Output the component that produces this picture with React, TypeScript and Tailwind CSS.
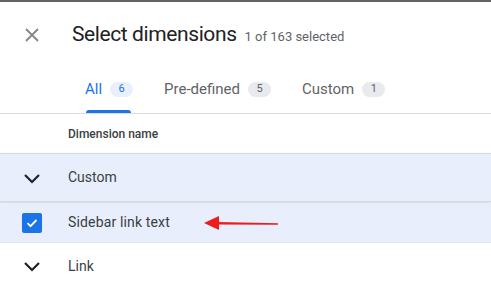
import React from 'react';

function Chevron() {
  return (
    <svg width="18" height="12" viewBox="0 0 18 12" className="text-[#202124]">
      <path d="M2 3l7 7 7-7" fill="none" stroke="currentColor" strokeWidth="2.2" />
    </svg>
  );
}

function Badge({ n, active }: { n: number; active?: boolean }) {
  return (
    <span
      className={
        active
          ? 'ml-2 inline-flex h-[15px] w-[23px] items-center justify-center rounded-full bg-[#e8f0fe] text-[11px] text-[#1a73e8]'
          : 'ml-2 inline-flex h-[15px] w-[23px] items-center justify-center rounded-full bg-[#e8eaed] text-[11px] text-[#5f6368]'
      }
    >
      {n}
    </span>
  );
}

export default function App() {
  return (
    <div className="h-[288px] w-[491px] overflow-hidden bg-white font-['Roboto',sans-serif] text-[#3c4043]">
      <div className="h-[2px] bg-[#5f6368]" />

      {/* Title */}
      <div className="flex h-[62px] items-center pt-[3px]">
        <div className="flex w-[72px] justify-center pr-[8px]">
          <svg width="14" height="14" viewBox="0 0 14 14">
            <path d="M1 1l12 12M13 1L1 13" stroke="#80868b" strokeWidth="1.8" />
          </svg>
        </div>
        <span className="text-[21px] tracking-[-0.4px] text-[#202124]">Select dimensions</span>
        <span className="ml-[8px] mt-[5px] text-[13px] text-[#5f6368]">1 of 163 selected</span>
      </div>

      {/* Tabs */}
      <div className="flex h-[50px] items-end border-b border-[#dadce0] pl-[85px]">
        <div className="relative flex h-full items-center pt-[2px]">
          <span className="text-[15px] text-[#1a73e8]">All</span>
          <Badge n={6} active />
          <div className="absolute bottom-0 left-[1px] right-[2px] h-[3px] rounded-t-[3px] bg-[#1a73e8]" />
        </div>
        <div className="ml-[31px] flex h-full items-center pt-[2px]">
          <span className="text-[15px] text-[#5f6368]">Pre-defined</span>
          <Badge n={5} />
        </div>
        <div className="ml-[31px] flex h-full items-center pt-[2px]">
          <span className="text-[15px] text-[#5f6368]">Custom</span>
          <Badge n={1} />
        </div>
      </div>

      {/* Header */}
      <div className="flex h-[39px] items-center pl-[68px] text-[12px] font-medium text-[#3c4043]">
        Dimension name
      </div>

      {/* Custom group */}
      <div className="flex h-[49px] items-center border-y border-[#d6d9de] bg-[#e8eefb] shadow-[0_1px_2px_rgba(60,64,67,0.25)]">
        <div className="flex w-[64px] justify-center">
          <Chevron />
        </div>
        <span className="pl-[4px] text-[14px]">Custom</span>
      </div>

      {/* Sidebar link text */}
      <div className="mt-[1px] flex h-[40px] items-center border-b border-[#e3e6ea] bg-[#e8eefb]">
        <div className="flex w-[64px] justify-center">
          <div className="flex h-[20px] w-[20px] items-center justify-center rounded-[2px] bg-[#1a73e8]">
            <svg width="14" height="14" viewBox="0 0 14 14">
              <path d="M2.5 7.2l3 3 6-6.2" fill="none" stroke="white" strokeWidth="1.8" />
            </svg>
          </div>
        </div>
        <span className="pl-[4px] text-[14px] tracking-[0.15px]">Sidebar link text</span>
        <svg width="76" height="16" viewBox="0 0 76 16" className="ml-[34px]">
          <path d="M14 7l60 1.2v1.6L14 9.5z" fill="#ee1c1c" />
          <path d="M0 8L15 1v14z" fill="#ee1c1c" />
        </svg>
      </div>

      {/* Link group */}
      <div className="flex h-[46px] items-center">
        <div className="flex w-[64px] justify-center">
          <Chevron />
        </div>
        <span className="pl-[4px] text-[14px]">Link</span>
      </div>
    </div>
  );
}
